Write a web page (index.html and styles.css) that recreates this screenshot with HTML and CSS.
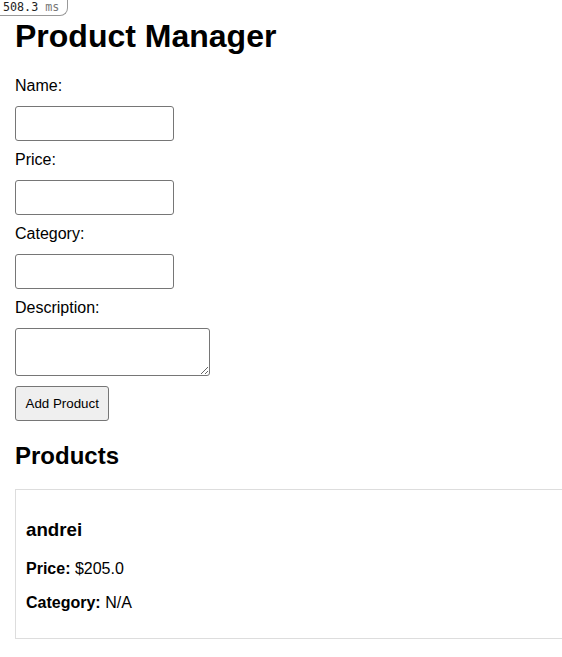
FILE: index.html
```html
<!DOCTYPE html>
<html>
<head>
<meta charset="utf-8">
<link rel="stylesheet" href="styles.css">
</head>
<body>
<div class="timer"><span class="timer-num">508.3</span> <span class="timer-unit">ms</span></div>
<div class="app">
  <h1 class="title">Product Manager</h1>
  <form class="form">
    <label class="label">Name:</label>
    <input class="field" type="text">
    <label class="label">Price:</label>
    <input class="field" type="text">
    <label class="label">Category:</label>
    <input class="field" type="text">
    <label class="label">Description:</label>
    <textarea class="area"></textarea>
    <button class="btn" type="button">Add Product</button>
  </form>
  <h2 class="section">Products</h2>
  <div class="card">
    <h3 class="card-title">andrei</h3>
    <p class="card-line"><strong>Price:</strong> $205.0</p>
    <p class="card-line"><strong>Category:</strong> N/A</p>
  </div>
</div>
</body>
</html>
```
FILE: styles.css
```css
html { overflow: hidden; }
body {
  margin: 0;
  font-family: "Liberation Sans", Arial, sans-serif;
  color: #000;
  background: #fff;
}
.timer {
  position: absolute;
  top: 0;
  left: 0;
  height: 15px;
  padding: 0 8px 0 3px;
  border: 1px solid #999;
  border-top: none;
  border-left: none;
  border-bottom-right-radius: 8px;
  background: #fff;
  font-family: "DejaVu Sans Mono", monospace;
  font-size: 11.7px;
  line-height: 15px;
  color: #222;
}
.timer-unit { color: #777; }
.app {
  padding: 18px 15px 15px;
}
.title {
  margin: 0 0 21px;
  font-size: 32px;
  line-height: 37px;
}
.form {
  display: flex;
  flex-direction: column;
  align-items: flex-start;
}
.label {
  display: block;
  font-size: 16px;
  line-height: 20px;
  margin-bottom: 10px;
}
.field {
  box-sizing: border-box;
  width: 159px;
  height: 35px;
  margin: 0 0 9px;
  padding: 8px;
  border: 1px solid #767676;
  border-radius: 3px;
  font: 16px "Liberation Sans", Arial, sans-serif;
}
.area {
  box-sizing: border-box;
  width: 195px;
  height: 48px;
  margin: 0 0 10px;
  padding: 8px;
  border: 1px solid #767676;
  border-radius: 3px;
  font: 13.33px "Liberation Sans", Arial, sans-serif;
}
.btn {
  box-sizing: border-box;
  height: 35px;
  padding: 0 9.5px;
  border: 1px solid #767676;
  border-radius: 3px;
  background: #efefef;
  color: #000;
  font: 13.33px "Liberation Sans", Arial, sans-serif;
}
.section {
  margin: 21px 0 19px;
  font-size: 24px;
  line-height: 27.5px;
}
.card {
  box-sizing: border-box;
  width: 560px;
  padding: 10px 10px 11px;
  border: 1px solid #ddd;
}
.card-title {
  margin: 19.7px 0 19.7px;
  font-size: 18.72px;
  line-height: 21.5px;
}
.card-line {
  margin: 15px 0;
  font-size: 16px;
  line-height: 18.4px;
}
```
